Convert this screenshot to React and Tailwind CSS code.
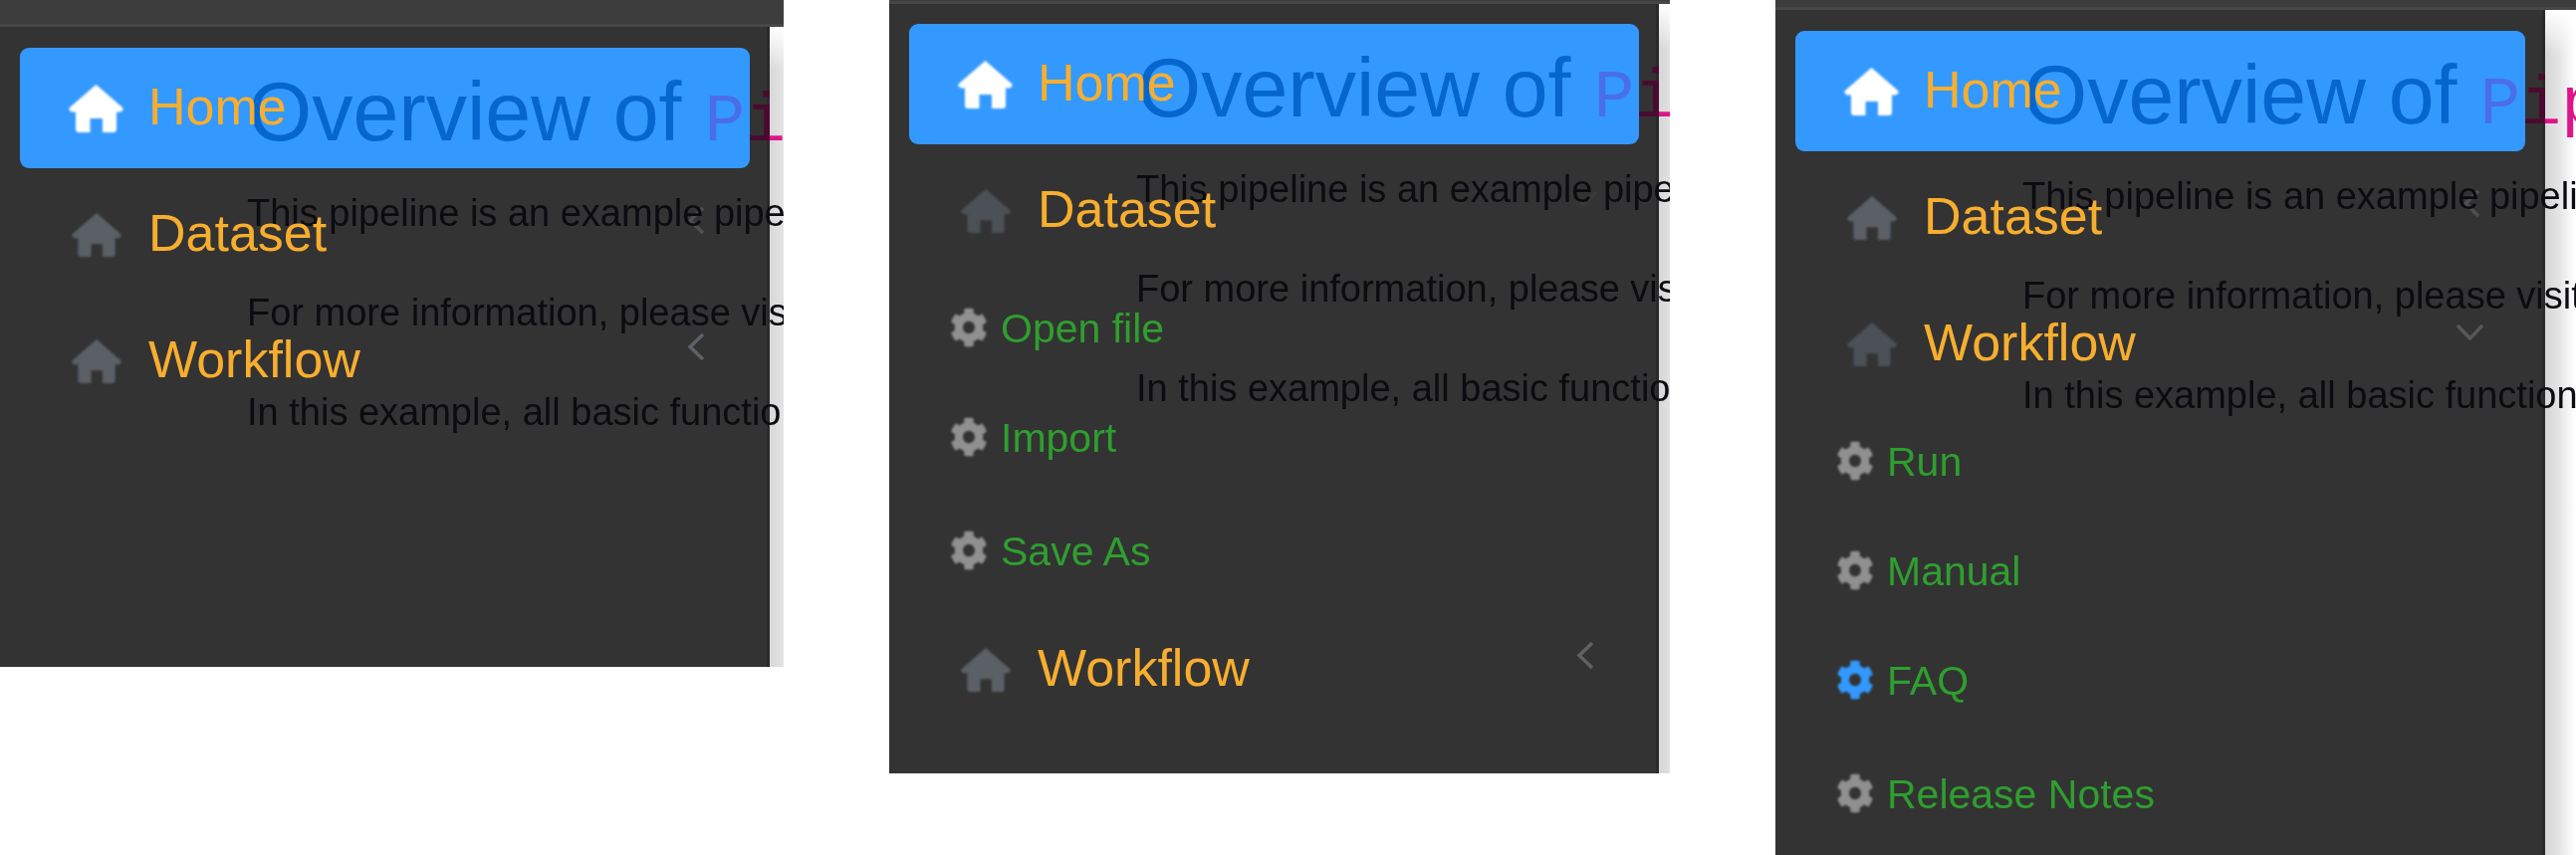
import { FaCog } from 'react-icons/fa'

const HouseIcon = ({ className }) => (
  <svg viewBox="0 0 55 48" className={className} fill="currentColor" preserveAspectRatio="none">
    <path d="M27.5 0 L54 23 Q56 26 52 27.5 H48 V45 Q48 48 45 48 H34 V34 H21.5 V48 H10 Q7 48 7 45 V27.5 H3 Q-1 26 1 23 Z" />
  </svg>
)

const Chevron = ({ open, color }) =>
  open ? (
    <svg viewBox="0 0 29 17" className={`ml-auto mr-[41px] mb-[25px] h-[17px] w-[29px] blur-[0.6px] ${color}`} fill="none" stroke="currentColor" strokeWidth="3.5">
      <path d="M2 2 L14.5 15 L27 2" />
    </svg>
  ) : (
    <svg viewBox="0 0 18 29" className={`ml-auto mr-[45px] mb-[29px] h-[29px] w-[18px] blur-[0.6px] ${color}`} fill="none" stroke="currentColor" strokeWidth="3.5">
      <path d="M16 2 L3 14.5 L16 27" />
    </svg>
  )

const NavItem = ({ label, active, iconColor, chevron, open, chevronColor }) => (
  <div className={`flex h-[121px] w-[733px] items-center pl-[49px] rounded-[9px] ${active ? 'bg-[#3399ff]' : ''}`}>
    <div className="relative z-20 flex w-[55px] justify-center blur-[0.8px]">
      <HouseIcon className={active ? 'h-[48px] w-[55px] text-white' : `h-[44px] w-[50px] ${iconColor}`} />
    </div>
    <span className="relative z-20 ml-[25px] mb-[4px] text-[52px] text-[#f7ae2f] blur-[0.6px]">{label}</span>
    {chevron && <Chevron open={open} color={chevronColor} />}
  </div>
)

const SubItem = ({ label, active, last }) => (
  <div className={`flex h-[110px] items-center pl-[41px] ${last ? 'mt-[4px]' : ''}`}>
    <FaCog preserveAspectRatio="none" className={`h-[40px] w-[38px] blur-[0.8px] ${active ? 'text-[#3399ff]' : 'text-[#909090]'}`} />
    <span className="relative z-20 ml-[13px] mt-[3px] text-[41px] text-[#2f9e2f] blur-[0.6px]">{label}</span>
  </div>
)

const PageText = ({ top }) => (
  <div className={`pointer-events-none absolute inset-x-0 bottom-0 z-10 overflow-hidden whitespace-nowrap pl-[248px] blur-[0.6px] ${top}`}>
    <h1 className="h-[102px] pl-[1px] text-[82.5px] leading-[100px] text-[#0566cf]">
      Overview of{' '}
      <code className="bg-[linear-gradient(90deg,#4a6ee8_46px,#4a0a30_46px,#4a0a30_66px,#e0148a_66px)] bg-clip-text font-['Liberation_Mono',monospace] text-[68px] text-transparent">
        Pipeline
      </code>
    </h1>
    <p className="text-[38px] leading-[100px] text-[#0b0b10]">This pipeline is an example pipeline</p>
    <p className="text-[38px] leading-[100px] text-[#0b0b10]">For more information, please visit</p>
    <p className="text-[38px] leading-[100px] text-[#0b0b10]">In this example, all basic functions</p>
  </div>
)

const Panel = ({ size, bar, pad, textTop, children }) => (
  <div className={`relative flex shrink-0 flex-col overflow-hidden ${size}`}>
    <div className={`shrink-0 border-b-[3px] border-[#464846] bg-[#3d3d3d] ${bar}`} />
    <div className="flex min-h-0 flex-1">
      <div className={`flex w-[773px] shrink-0 flex-col gap-[6px] border-r-[3px] border-[#2a2a2a] bg-[#333333] pl-[20px] ${pad}`}>
        {children}
      </div>
      <div className="flex-1 bg-[linear-gradient(180deg,#ffffff,transparent_45px),linear-gradient(90deg,#d6d6d6,#e4e4e4_14px,#ffffff_30px)]" />
    </div>
    <PageText top={textTop} />
  </div>
)

export default function App() {
  return (
    <div className="flex h-[859px] w-[2587px] items-start gap-[106px] overflow-hidden bg-white font-['Liberation_Sans',Arial,sans-serif]">
      <Panel size="h-[670px] w-[787px]" bar="h-[27px]" pad="pt-[21px]" textTop="top-[62px]">
        <NavItem label="Home" active />
        <NavItem label="Dataset" iconColor="text-[#5b6067]" chevron chevronColor="text-[#4d4f52]" />
        <NavItem label="Workflow" iconColor="text-[#5b6067]" chevron chevronColor="text-[#5e6266]" />
      </Panel>

      <Panel size="h-[777px] w-[784px]" bar="h-[4px]" pad="pt-[20px]" textTop="top-[38px]">
        <NavItem label="Home" active />
        <NavItem label="Dataset" iconColor="text-[#4c5157]" chevron open chevronColor="text-[#3a3a3a]" />
        <div className="-mt-[4px] -mb-[2px]">
          <SubItem label="Open file" />
          <SubItem label="Import" />
          <SubItem label="Save As" last />
        </div>
        <NavItem label="Workflow" iconColor="text-[#5b6067]" chevron chevronColor="text-[#5e6266]" />
      </Panel>

      <Panel size="h-[859px] w-[804px]" bar="h-[10px]" pad="pt-[21px]" textTop="top-[45px]">
        <NavItem label="Home" active />
        <NavItem label="Dataset" iconColor="text-[#5b6067]" chevron chevronColor="text-[#4d4f52]" />
        <NavItem label="Workflow" iconColor="text-[#4c5157]" chevron open chevronColor="text-[#55585b]" />
        <div className="-mt-[4px]">
          <SubItem label="Run" />
          <SubItem label="Manual" />
          <SubItem label="FAQ" active />
          <SubItem label="Release Notes" last />
        </div>
      </Panel>
    </div>
  )
}
